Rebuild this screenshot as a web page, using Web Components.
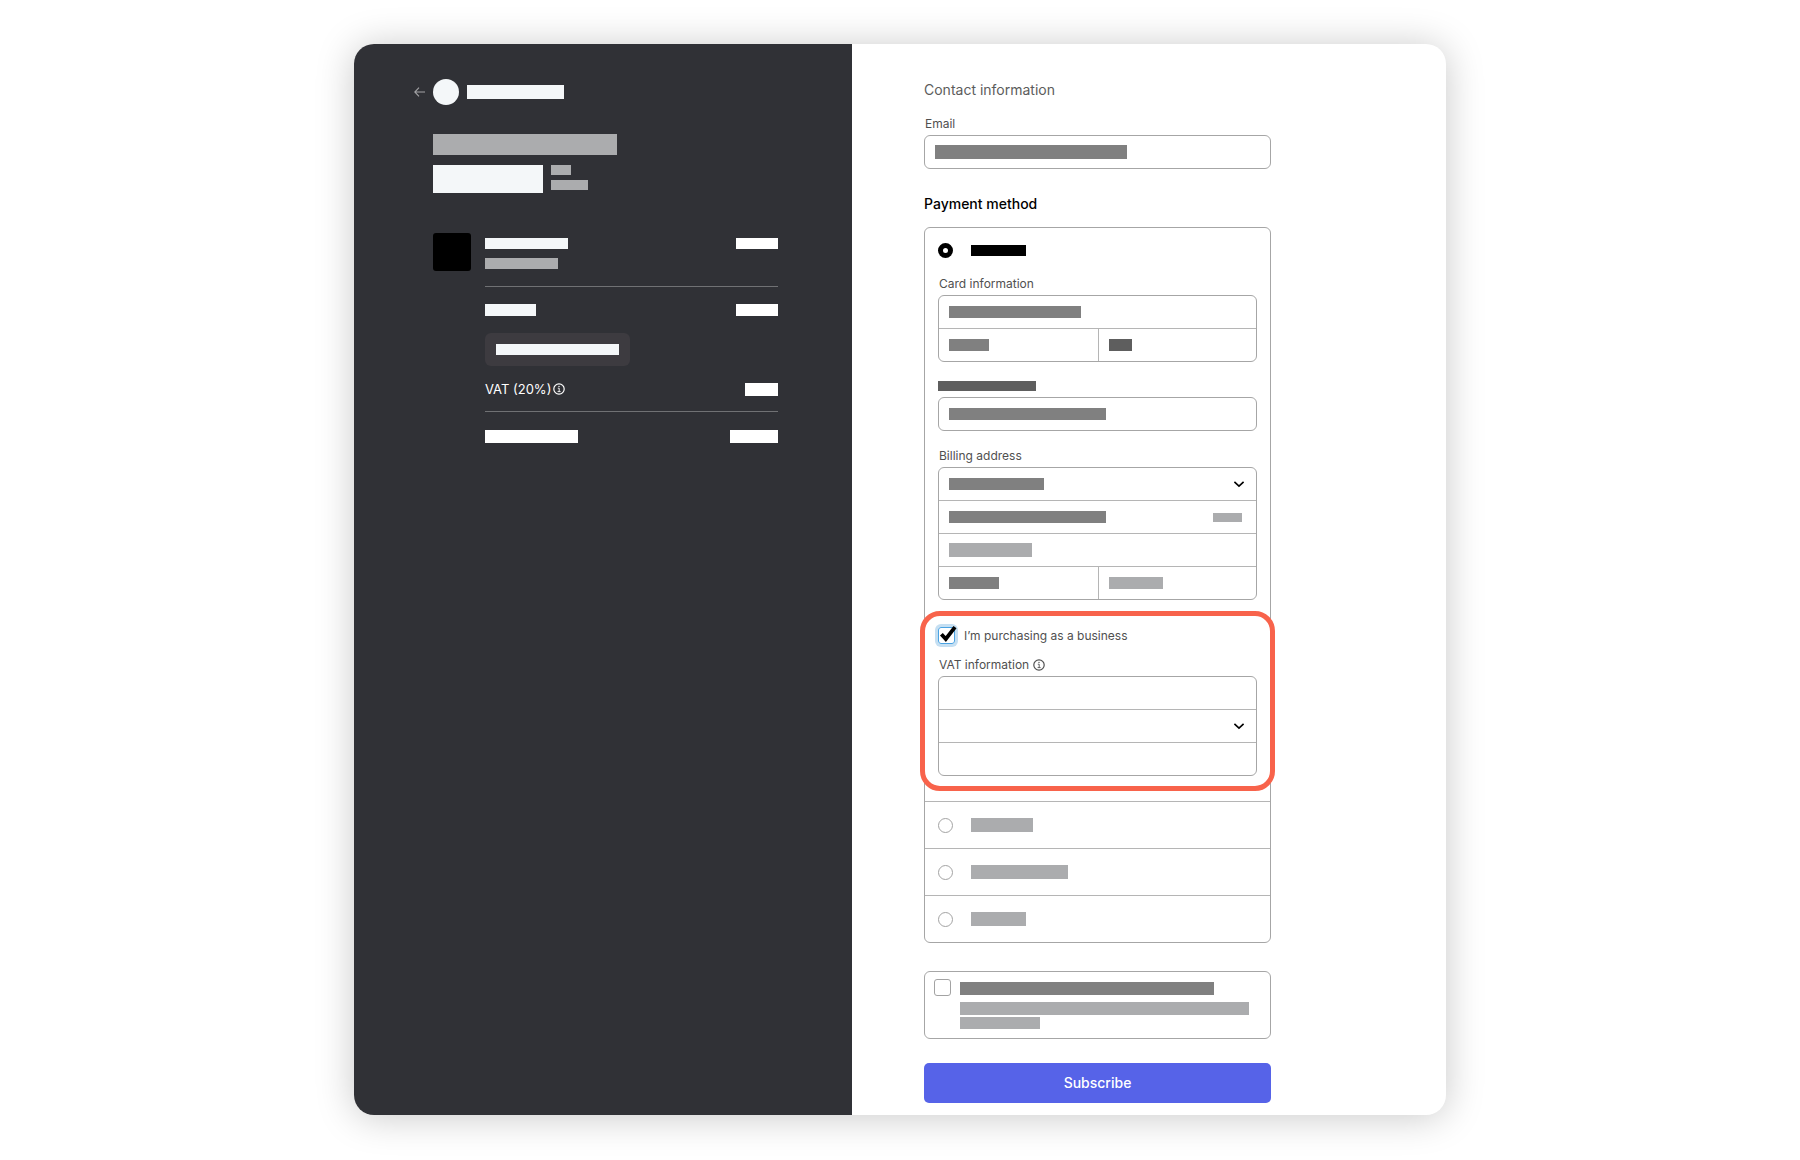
<!DOCTYPE html>
<html lang="en">
<head>
<meta charset="utf-8">
<meta name="viewport" content="width=device-width, initial-scale=1">
<title>Checkout</title>
<style>
  body { margin: 0; background: #fff; color: #505050; font-family: Inter, "Liberation Sans", sans-serif; font-size: 12px; line-height: 16px; }
</style>
</head>
<body>
<checkout-page>
  <order-summary slot="summary"></order-summary>
  <payment-form slot="form"></payment-form>
</checkout-page>

<script>
// Placeholder block, sized with w / h and coloured with tone
class RedactedBar extends HTMLElement {
  constructor() {
    super();
    this.attachShadow({ mode: 'open' });
  }

  connectedCallback() {
    const w = this.getAttribute('w');
    const h = this.getAttribute('h') || 12;
    this.shadowRoot.innerHTML = `
      <style>
        :host { display: block; flex: none; width: ${w}px; max-width: 100%; height: ${h}px; background: #808080; pointer-events: none; }
        :host([tone="light"]) { background: #abacae; }
        :host([tone="dark"]) { background: #5e5e5e; }
        :host([tone="black"]) { background: #000; }
        :host([tone="white"]) { background: #fff; }
        :host([tone="pale"]) { background: #f4f7f9; }
      </style>
    `;
  }
}
customElements.define('redacted-bar', RedactedBar);

class UiIcon extends HTMLElement {
  static shapes = {
    back: '<svg width="11" height="10" viewBox="0 0 11 10"><path d="M5 .6.8 5 5 9.4M.8 5H11" stroke="#a3a3a6" stroke-width="1.1"/></svg>',
    info: '<svg width="12" height="12" viewBox="0 0 12 12"><circle cx="6" cy="6" r="5.2" stroke="currentColor" stroke-width="1.2"/><path d="M4.8 5.2H6.2V8.6M4.6 8.6H7.6" stroke="currentColor" stroke-width=".9"/><circle cx="6" cy="3.4" r=".7" fill="currentColor"/></svg>',
    chevron: '<svg width="12" height="8" viewBox="0 0 12 8"><path d="M1.4 1.8 6 6.2 10.6 1.8" stroke="#000" stroke-width="1.6"/></svg>',
    check: '<svg width="17" height="17" viewBox="0 0 17 17"><path d="M3.4 7.2 7.8 12 17 .2" stroke="#000" stroke-width="3.8"/></svg>'
  };

  constructor() {
    super();
    this.attachShadow({ mode: 'open' });
  }

  connectedCallback() {
    this.shadowRoot.innerHTML = `
      <style>
        :host { display: block; flex: none; pointer-events: none; }
        svg { display: block; fill: none; overflow: visible; }
      </style>
      ${UiIcon.shapes[this.getAttribute('name')]}
    `;
  }
}
customElements.define('ui-icon', UiIcon);

class CheckoutPage extends HTMLElement {
  constructor() {
    super();
    this.attachShadow({ mode: 'open' });
    this.shadowRoot.innerHTML = `
      <style>
        :host { display: block; padding: 44px 16px 45px; }
        main { display: grid; grid-template-columns: 498fr 594fr; max-width: 1092px; margin: 0 auto; border-radius: 20px; overflow: hidden; background: #fff; box-shadow: 0 2px 38px rgba(0, 0, 0, 0.22); }
      </style>
      <main>
        <slot name="summary"></slot>
        <slot name="form"></slot>
      </main>
    `;
  }
}
customElements.define('checkout-page', CheckoutPage);

class OrderSummary extends HTMLElement {
  constructor() {
    super();
    this.attachShadow({ mode: 'open' });
    this.shadowRoot.innerHTML = `
      <style>
        :host { display: block; padding: 35px 74px 35px 60px; background: #303136; color: #fff; }
        header { display: flex; align-items: center; gap: 8px; }
        header a { display: block; padding: 8px 0; }
        .avatar { width: 26px; height: 26px; border-radius: 50%; background: #f4f7f9; }
        .body { padding-left: 19px; }
        .plan { margin-top: 29px; }
        .price { display: flex; gap: 8px; margin-top: 10px; }
        .period { display: grid; gap: 5px; align-content: start; }
        .items { display: grid; grid-template-columns: 38px 1fr; gap: 14px; margin-top: 40px; }
        .thumb { height: 38px; border-radius: 3px; background: #000; }
        .row { display: flex; justify-content: space-between; align-items: center; }
        .product { align-items: flex-start; padding: 5px 0 17px; border-bottom: 1px solid #707174; }
        .names { display: grid; gap: 9px; }
        .subtotal { margin-top: 17px; }
        button { display: block; height: 33px; margin: 17px 0 14px; padding: 0 11px; border: 0; border-radius: 6px; background: #3d3b40; }
        .vat { padding-bottom: 13px; border-bottom: 1px solid #707174; font-size: 13px; line-height: 18px; }
        .vat span { display: flex; align-items: center; gap: 2px; }
        .total { margin-top: 18px; }
      </style>
      <header>
        <a href="#" aria-label="Back"><ui-icon name="back"></ui-icon></a>
        <div class="avatar"></div>
        <redacted-bar w="97" h="14" tone="pale"></redacted-bar>
      </header>
      <div class="body">
        <redacted-bar class="plan" w="184" h="21" tone="light"></redacted-bar>
        <div class="price">
          <redacted-bar w="110" h="28" tone="pale"></redacted-bar>
          <div class="period">
            <redacted-bar w="20" h="10" tone="light"></redacted-bar>
            <redacted-bar w="37" h="10" tone="light"></redacted-bar>
          </div>
        </div>
        <div class="items">
          <div class="thumb"></div>
          <div>
            <div class="row product">
              <div class="names">
                <redacted-bar w="83" h="11" tone="pale"></redacted-bar>
                <redacted-bar w="73" h="11" tone="light"></redacted-bar>
              </div>
              <redacted-bar w="42" h="11" tone="white"></redacted-bar>
            </div>
            <div class="row subtotal">
              <redacted-bar w="51" h="12" tone="pale"></redacted-bar>
              <redacted-bar w="42" h="12" tone="white"></redacted-bar>
            </div>
            <button type="button" aria-label="Add promotion code"><redacted-bar w="123" h="11" tone="pale"></redacted-bar></button>
            <div class="row vat">
              <span>VAT (20%) <ui-icon name="info"></ui-icon></span>
              <redacted-bar w="33" h="13" tone="white"></redacted-bar>
            </div>
            <div class="row total">
              <redacted-bar w="93" h="13" tone="white"></redacted-bar>
              <redacted-bar w="48" h="13" tone="white"></redacted-bar>
            </div>
          </div>
        </div>
      </div>
    `;
  }
}
customElements.define('order-summary', OrderSummary);

class PaymentForm extends HTMLElement {
  constructor() {
    super();
    this.attachShadow({ mode: 'open' });
    this.shadowRoot.innerHTML = `
      <style>
        * { box-sizing: border-box; }
        :host { display: block; padding: 36px 175px 12px 72px; }
        h2 { margin: 0; color: #000; font-size: 14px; line-height: 20px; font-weight: 500; }
        h2.muted { margin-bottom: 16px; color: #5c5c5c; font-weight: 400; }
        .title { display: flex; align-items: center; gap: 4px; width: fit-content; margin-bottom: 3px; padding-left: 1px; }

        /* Bordered stack of fields, 32px a row */
        .group { border: 1px solid #a6a6a6; border-radius: 6px; background: #fff; overflow: hidden; }
        .field { display: grid; grid-template-columns: minmax(0, 1fr); align-items: center; height: 32px; }
        .field > * { grid-area: 1 / 1; margin-left: 10px; }
        .field > .end { justify-self: end; margin-right: 11px; }
        .field > redacted-bar.end { margin-right: 14px; }
        .field + .field, .pair { border-top: 1px solid #b5b5b5; box-sizing: content-box; }
        .pair { display: grid; grid-template-columns: 1fr 1fr; }
        .pair .field + .field { border-top: 0; border-left: 1px solid #b5b5b5; }
        input, select { margin: 0; font: inherit; color: #000; }
        .field > input, .field > select { width: 100%; height: 100%; margin: 0; padding: 0 10px; border: 0; background: transparent; appearance: none; }

        .email { margin-bottom: 25px; }
        .methods { margin-top: 13px; border: 1px solid #a6a6a6; border-radius: 6px; }
        .option { display: flex; align-items: center; gap: 18px; height: 46px; padding: 0 13px; }
        .option input { width: 15px; height: 15px; border: 1px solid #a3a3a3; border-radius: 50%; appearance: none; }
        .option input:checked { border: 5px solid #000; }
        .methods > .option { height: 44px; }
        .details { padding: 4px 13px 10px; }
        .name { display: block; margin: 19px 0 6px; }
        .billing { margin-top: 17px; }
        .others .option { border-top: 1px solid #b5b5b5; box-sizing: content-box; width: auto; }

        .highlight { margin: 11px -18px 0; padding: 11px 13px 10px; border: 5px solid #f8634b; border-radius: 20px; background: #fff; }
        .business { display: flex; align-items: center; gap: 9px; margin-bottom: 13px; }
        .tick { display: grid; }
        .tick > * { grid-area: 1 / 1; }
        input[type="checkbox"] { width: 17px; height: 17px; border: 1px solid #a3a3a3; border-radius: 3px; appearance: none; }
        .tick input[type="checkbox"] { border-color: #4ba3e3; box-shadow: 0 0 0 3px #c5dff2; }
        .tick input:not(:checked) + ui-icon { visibility: hidden; }

        .consent { display: flex; gap: 9px; margin-top: 28px; padding: 7px 9px 9px; border: 1px solid #a6a6a6; border-radius: 6px; }
        .lines { display: grid; gap: 2px; padding-top: 3px; }
        .lines .first { margin-bottom: 5px; }
        button { display: block; width: 100%; height: 40px; margin-top: 24px; border: 0; border-radius: 5px; background: #5663e8; color: #fff; font: inherit; font-size: 14px; font-weight: 500; line-height: 20px; }
      </style>
      <form>
        <h2 class="muted">Contact information</h2>
        <label class="title" for="email">Email</label>
        <div class="group email">
          <div class="field"><input id="email" type="email"><redacted-bar w="192" h="14"></redacted-bar></div>
        </div>

        <h2>Payment method</h2>
        <div class="methods">
          <label class="option"><input type="radio" name="method" aria-label="Card" checked><redacted-bar w="55" h="11" tone="black"></redacted-bar></label>
          <div class="details">
            <label class="title" for="card">Card information</label>
            <div class="group">
              <div class="field"><input id="card"><redacted-bar w="132"></redacted-bar></div>
              <div class="pair">
                <div class="field"><input aria-label="Expiry"><redacted-bar w="40"></redacted-bar></div>
                <div class="field"><input aria-label="Security code"><redacted-bar w="23" tone="dark"></redacted-bar></div>
              </div>
            </div>

            <label class="name" for="holder" aria-label="Name"><redacted-bar w="98" h="10" tone="dark"></redacted-bar></label>
            <div class="group">
              <div class="field"><input id="holder"><redacted-bar w="157"></redacted-bar></div>
            </div>

            <label class="title billing" for="country">Billing address</label>
            <div class="group">
              <div class="field">
                <select id="country"><option></option></select>
                <redacted-bar w="95"></redacted-bar>
                <ui-icon class="end" name="chevron"></ui-icon>
              </div>
              <div class="field">
                <input aria-label="Address line 1">
                <redacted-bar w="157"></redacted-bar>
                <redacted-bar class="end" w="29" h="9" tone="light"></redacted-bar>
              </div>
              <div class="field"><input aria-label="Address line 2"><redacted-bar w="83" h="14" tone="light"></redacted-bar></div>
              <div class="pair">
                <div class="field"><input aria-label="City"><redacted-bar w="50"></redacted-bar></div>
                <div class="field"><input aria-label="Postal code"><redacted-bar w="54" tone="light"></redacted-bar></div>
              </div>
            </div>

            <section class="highlight">
              <div class="business">
                <div class="tick"><input id="business" type="checkbox" checked><ui-icon name="check"></ui-icon></div>
                <label for="business">I’m purchasing as a business</label>
              </div>
              <label class="title" for="vat">VAT information <ui-icon name="info"></ui-icon></label>
              <div class="group">
                <div class="field"><input id="vat"></div>
                <div class="field">
                  <select aria-label="VAT type"><option></option></select>
                  <ui-icon class="end" name="chevron"></ui-icon>
                </div>
                <div class="field"><input aria-label="VAT number"></div>
              </div>
            </section>
          </div>
          <div class="others">
            <label class="option"><input type="radio" name="method" aria-label="Method 2"><redacted-bar w="62" h="14" tone="light"></redacted-bar></label>
            <label class="option"><input type="radio" name="method" aria-label="Method 3"><redacted-bar w="97" h="14" tone="light"></redacted-bar></label>
            <label class="option"><input type="radio" name="method" aria-label="Method 4"><redacted-bar w="55" h="14" tone="light"></redacted-bar></label>
          </div>
        </div>

        <label class="consent">
          <input type="checkbox" aria-label="Save my details">
          <span class="lines">
            <redacted-bar class="first" w="254" h="13"></redacted-bar>
            <redacted-bar w="289" h="13" tone="light"></redacted-bar>
            <redacted-bar w="80" h="12" tone="light"></redacted-bar>
          </span>
        </label>
        <button type="button">Subscribe</button>
      </form>
    `;
  }
}
customElements.define('payment-form', PaymentForm);
</script>
</body>
</html>
